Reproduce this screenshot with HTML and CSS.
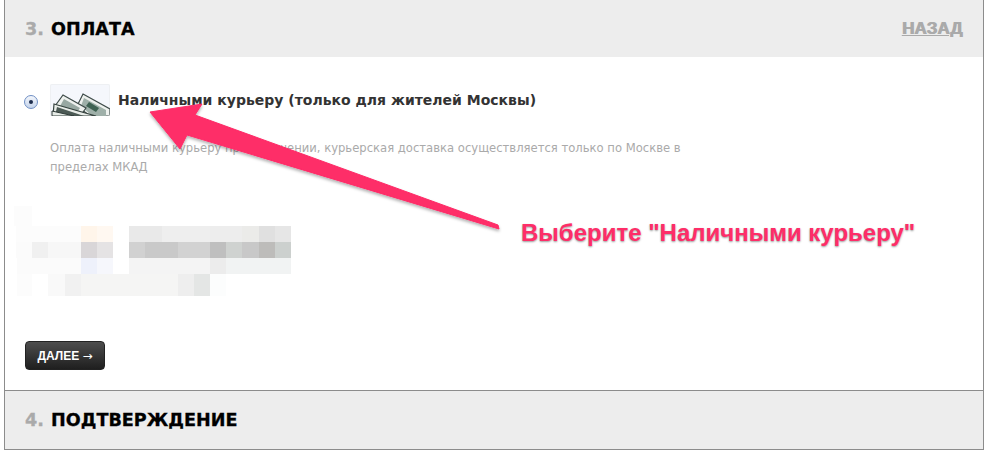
FILE: index.html
```html
<!DOCTYPE html>
<html lang="ru">
<head>
<meta charset="utf-8">
<title>Оплата</title>
<link rel="stylesheet" href="styles.css">
</head>
<body>
<div class="frame">
  <header class="step-head">
    <h2 class="step-title"><span class="num">3.</span> ОПЛАТА</h2>
    <a class="back" href="#">НАЗАД</a>
  </header>
  <section class="step-body">
    <div class="option">
      <span class="radio"><span class="dot"></span></span>
      <span class="thumb">
        <svg width="60" height="32" viewBox="0 0 60 32">
          <polygon points="33,10 60,25 60,32 40,32 27,22" fill="#eef1ee" stroke="#3f4c4a" stroke-width="1.2"/>
          <polygon points="34,14 56,26 56,32 42,32 31,22" fill="#9fb0a9"/>
          <polygon points="39,18 49,24 46,28 36,22" fill="#3f6252"/>
          <polygon points="13,11 36,24 30,32 8,32 5,22" fill="#eef1ee" stroke="#3f4c4a" stroke-width="1.2"/>
          <polygon points="14,15 30,24 26,30 9,24" fill="#98a8a2"/>
          <polygon points="4,20 46,32 3,32" fill="#e8ece8" stroke="#36433f" stroke-width="1.2"/>
          <polygon points="7,23 34,32 5,32" fill="#4c5a55"/>
          <polygon points="2,27 24,32 2,32" fill="#e6ebe6" stroke="#2e3a38" stroke-width="1"/>
        </svg>
      </span>
      <strong class="option-name">Наличными курьеру (только для жителей Москвы)</strong>
    </div>
    <p class="note">Оплата наличными курьеру при получении, курьерская доставка осуществляется только по Москве в пределах МКАД</p>
    <svg class="mosaic" width="300" height="93" viewBox="-2 0 300 93" aria-hidden="true">
      <rect x="-2" y="3" width="18" height="20" fill="#fcfcfc"/>
      <rect x="0" y="23" width="65" height="16" fill="#fcfcfc"/>
      <rect x="65" y="23" width="16" height="16" fill="#fff5ea"/>
      <rect x="81" y="23" width="16" height="16" fill="#fff8f1"/>
      <rect x="113" y="23" width="33" height="16" fill="#e9e9e9"/>
      <rect x="146" y="23" width="48" height="16" fill="#eeeeee"/>
      <rect x="194" y="23" width="32" height="16" fill="#ededed"/>
      <rect x="226" y="23" width="17" height="16" fill="#ebebe9"/>
      <rect x="243" y="23" width="16" height="16" fill="#e0e0e0"/>
      <rect x="259" y="23" width="16" height="16" fill="#e6e6e6"/>
      <rect x="0" y="39" width="16" height="16" fill="#fbfbfb"/>
      <rect x="16" y="39" width="16" height="16" fill="#f0f0f0"/>
      <rect x="32" y="39" width="33" height="16" fill="#f7f7f7"/>
      <rect x="65" y="39" width="16" height="16" fill="#d9d6d8"/>
      <rect x="81" y="39" width="16" height="16" fill="#e5e3e4"/>
      <rect x="113" y="39" width="16" height="16" fill="#d1d1d1"/>
      <rect x="129" y="39" width="33" height="16" fill="#c9c9c9"/>
      <rect x="162" y="39" width="32" height="16" fill="#d2d2d2"/>
      <rect x="194" y="39" width="16" height="16" fill="#bfbfbf"/>
      <rect x="210" y="39" width="16" height="16" fill="#cfd2d0"/>
      <rect x="226" y="39" width="17" height="16" fill="#c8c8c8"/>
      <rect x="243" y="39" width="16" height="16" fill="#bdbcba"/>
      <rect x="259" y="39" width="16" height="16" fill="#ccd0ce"/>
      <rect x="1" y="55" width="64" height="16" fill="#fbfbfb"/>
      <rect x="65" y="55" width="16" height="16" fill="#eef1fb"/>
      <rect x="81" y="55" width="16" height="16" fill="#f6f7fc"/>
      <rect x="113" y="55" width="81" height="16" fill="#f4f4f4"/>
      <rect x="194" y="55" width="16" height="16" fill="#ececec"/>
      <rect x="210" y="55" width="65" height="16" fill="#f1f3f3"/>
      <rect x="1" y="71" width="15" height="22" fill="#fcfcfc"/>
      <rect x="32" y="71" width="17" height="22" fill="#f9f9f9"/>
      <rect x="49" y="71" width="16" height="22" fill="#f1f1f1"/>
      <rect x="65" y="71" width="97" height="22" fill="#f5f5f4"/>
      <rect x="162" y="71" width="16" height="22" fill="#eeeeee"/>
      <rect x="178" y="71" width="16" height="22" fill="#e4e6e5"/>
      <rect x="194" y="71" width="16" height="22" fill="#fcfdfd"/>
    </svg>
    <button class="next" type="button">ДАЛЕЕ <span class="next-arrow">→</span></button>
  </section>
  <header class="step-head step-head-last">
    <h2 class="step-title"><span class="num">4.</span> ПОДТВЕРЖДЕНИЕ</h2>
  </header>
</div>
<svg class="arrow" width="986" height="452" viewBox="0 0 986 452" aria-hidden="true">
  <defs>
    <filter id="sh" x="-5%" y="-5%" width="110%" height="115%">
      <feDropShadow dx="0" dy="2" stdDeviation="1.5" flood-color="#000" flood-opacity=".3"/>
    </filter>
  </defs>
  <polygon points="150,112 202,104 195,115 498,225 499,229 187,135 180,149" fill="#fe2d68" stroke="#fe2d68" stroke-width="1" stroke-linejoin="round" filter="url(#sh)"/>
</svg>
<div class="callout">Выберите "Наличными курьеру"</div>
</body>
</html>
```
FILE: styles.css
```css
html, body { margin: 0; padding: 0; background: #fff; }
body {
  width: 986px;
  height: 452px;
  overflow: hidden;
  position: relative;
  font-family: "Liberation Sans", Arial, sans-serif;
}
.frame {
  margin: 0 2px 0 4px;
  border: 1px solid #8c8c8c;
  border-top: 0;
  height: 449px;
  width: 978px;
  display: flex;
  flex-direction: column;
}
.step-head {
  height: 57px;
  background: #ededed;
  padding: 0 21px 0 20px;
  display: flex;
  align-items: center;
  justify-content: space-between;
  flex: none;
}
.step-head-last {
  height: 58px;
  border-top: 1px solid #8c8c8c;
}
.step-title {
  margin: 0;
  font-family: "DejaVu Sans", sans-serif;
  font-size: 17.6px;
  font-weight: 700;
  color: #000;
  -webkit-text-stroke: 0.3px currentColor;
}
.num { color: #aaa; margin-right: 1px; }
.back {
  font-family: "Liberation Sans", sans-serif;
  font-weight: 700;
  font-size: 17px;
  color: #aaa;
  text-decoration: underline;
  text-shadow: 1px 0 0 #aaa;
}
.step-body {
  flex: 1;
  background: #fff;
  padding: 27px 0 0 19px;
  display: flex;
  flex-direction: column;
  align-items: flex-start;
  min-height: 0;
}
.option {
  display: flex;
  align-items: center;
  height: 32px;
}
.radio {
  width: 14px;
  height: 14px;
  box-sizing: border-box;
  border-radius: 50%;
  border: 1px solid #6f8fc4;
  background: linear-gradient(#f4f7fc, #c4d3ea);
  display: flex;
  align-items: center;
  justify-content: center;
  margin-right: 12px;
  margin-top: 4px;
}
.dot { width: 4px; height: 4px; border-radius: 50%; background: #1c2c4c; }
.thumb {
  width: 60px;
  height: 32px;
  background: #f5f7fc;
  border-radius: 2px;
  overflow: hidden;
  display: block;
  margin-right: 8px;
  box-shadow: inset 0 0 0 1px #eef0f3;
}
.thumb svg { display: block; }
.option-name {
  font-family: "DejaVu Sans", sans-serif;
  font-size: 14px;
  font-weight: 700;
  color: #333;
}
.note {
  margin: 23px 0 0 26px;
  width: 640px;
  font-family: "DejaVu Sans", sans-serif;
  font-size: 11.6px;
  line-height: 19px;
  color: #aaa;
}
.mosaic {
  display: block;
  margin: 26px 0 0 -10px;
}
.next {
  margin: 45px 0 0 1px;
  width: 80px;
  height: 29px;
  padding: 0;
  border: 1px solid #222;
  border-radius: 4px;
  background: linear-gradient(#4d4d4d, #1f1f1f);
  color: #fff;
  font-family: "Liberation Sans", sans-serif;
  font-size: 12px;
  font-weight: 700;
}
.next-arrow { font-family: "DejaVu Sans", sans-serif; font-weight: 400; }
.arrow {
  position: absolute;
  left: 0;
  top: 0;
  pointer-events: none;
}
.callout {
  position: absolute;
  left: 521px;
  top: 219px;
  font-family: "Liberation Sans", sans-serif;
  font-size: 24px;
  font-weight: 700;
  color: #fe2d68;
  white-space: nowrap;
  text-shadow: 0 1px 2px rgba(0,0,0,.4);
}
```
